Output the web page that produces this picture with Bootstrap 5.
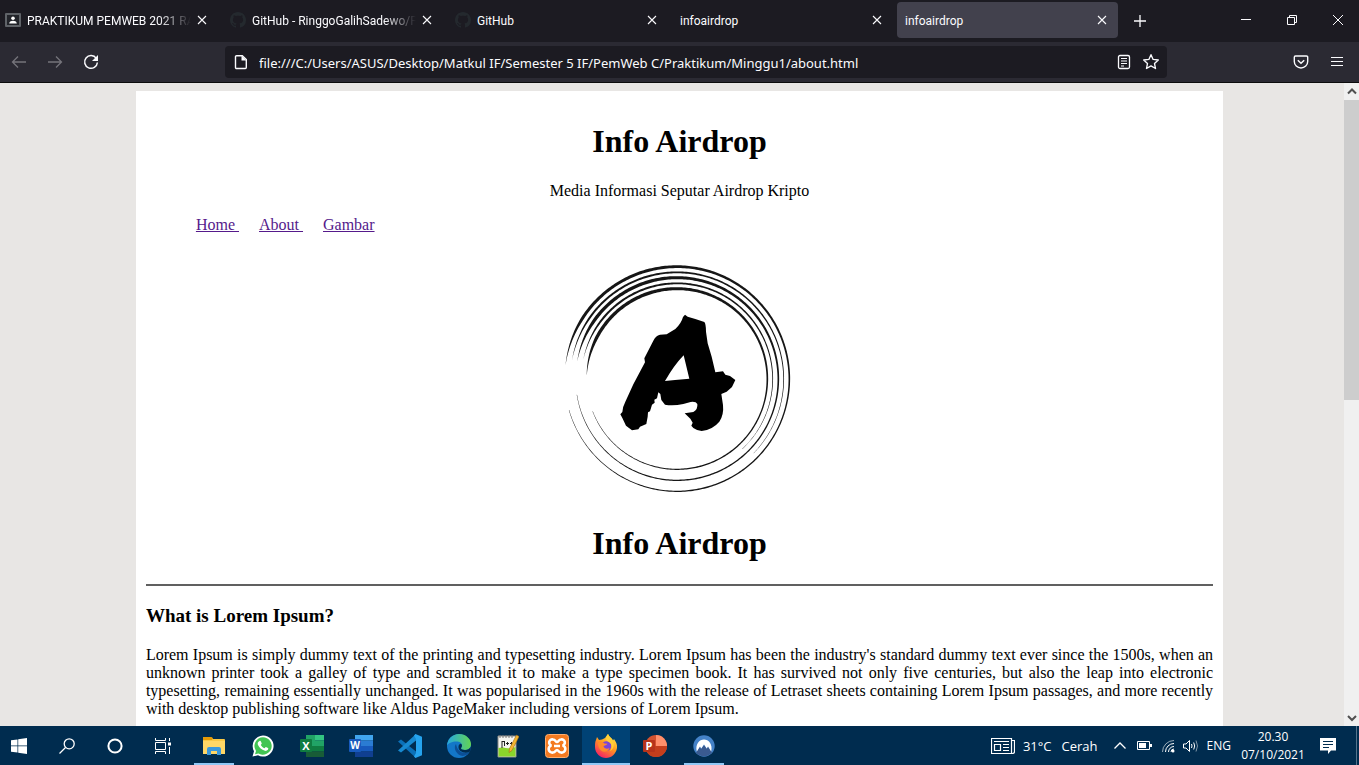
<!DOCTYPE html>
<html lang="id">
<head>
<meta charset="utf-8">
<meta name="viewport" content="width=device-width, initial-scale=1">
<title>infoairdrop</title>
<link href="https://cdn.jsdelivr.net/npm/bootstrap@5.3.0/dist/css/bootstrap.min.css" rel="stylesheet">
<style>
  body { font-family: "Open Sans", "Noto Sans", sans-serif; font-size: 12px; line-height: 18px; }
  svg { display: block; flex: none; }
  button { color: inherit; background: none; border: 0; padding: 0; }

  /* Browser window */
  .tab-strip { background: #1c1b22; color: #fbfbfe; height: 42px; padding: 2px 0; }
  .tab-list { gap: 4px; min-width: 0; }
  .tab-item { flex: 0 1 221px; min-width: 0; height: 36px; padding: 0 11px 0 8px; border-radius: 4px; gap: 6px; }
  .tab-item:first-child { flex-basis: 218px; padding-left: 5px; }
  .tab-item.current { background: #42414d; }
  .tab-title { color: inherit; text-decoration: none; white-space: nowrap; overflow: hidden; font-family: Roboto, "Open Sans", sans-serif; padding-top: 2px; }
  .tab-title.fade-out { -webkit-mask-image: linear-gradient(to left, transparent, #000 32px); mask-image: linear-gradient(to left, transparent, #000 32px); }
  .new-tab { padding: 0 12px; }
  .win-btn { width: 46px; height: 36px; padding-left: 4px; }
  .tool-row { background: #2b2a33; color: #fbfbfe; height: 41px; border-bottom: 1px solid #0c0c0d; }
  .tool-left { width: 225px; gap: 20px; padding-left: 11px; }
  .tool-right { width: 192px; gap: 20px; padding-right: 14px; }
  .url-box { background: #1c1b22; height: 32px; border-radius: 4px; padding: 0 7px 0 8px; gap: 10px; }
  .url-box input { background: none; border: 0; outline: 0; color: inherit; font-family: "Noto Sans", sans-serif; font-size: 13px; padding: 2px 0 0; min-width: 0; }

  /* Web page */
  .viewport { background: #e8e6e4; min-height: 0; }
  .sheet { width: 80%; background: #fff; color: #000; padding: 32px 10px; font-family: "Liberation Serif", serif; font-size: 16px; line-height: 18px; }
  .sheet h1 { font-size: 32px; font-weight: 700; line-height: 36px; margin: 0; }
  .sheet h2 { font-size: 19px; font-weight: 700; line-height: 20px; margin: 0 0 20px; }
  .sheet a { color: #551a8b; white-space: pre; }
  .tagline { margin: 23px 0 0; }
  .site-nav { gap: 20px; padding-left: 50px; margin: 16px 0; }
  .brand-end { padding-top: 20px; }
  .rule { border: 0; opacity: 1; height: 2px; background: #606060; margin: 23px 0 20px; }
  .justified { text-align: justify; }
  .scroll-track { width: 15px; background: #f0f0f0; }
  .scroll-thumb { height: 300px; background: #cdcdcd; }

  /* Desktop taskbar */
  .taskbar { background: #002c4f; color: #fff; height: 39px; }
  .task-btn { width: 48px; height: 39px; display: flex; align-items: center; justify-content: center; border-bottom: 2px solid transparent; padding-top: 2px; }
  .task-btn.start { width: 43px; padding-right: 5px; }
  .task-btn.notices { width: 51px; padding-right: 5px; }
  .task-btn.running { width: 40px; margin: 0 4px; border-color: #90c8f6; }
  .task-btn.focused { border-color: #90c8f6; background: #004275; }
  .apps { gap: 1px; margin-left: 3px; }
  .weather { font-size: 13px; gap: 8px; }
  .weather-text { gap: 10px; }
  .tray { gap: 8px; margin-left: 15px; }
  .clock { width: 64px; margin-left: 10px; }
  .desk-edge { width: 3px; border-left: 1px solid #55748c; }
</style>
</head>
<body class="vh-100 d-flex flex-column overflow-hidden">

<svg width="0" height="0" class="position-absolute" aria-hidden="true">
  <defs>
    <symbol id="i-x" viewBox="0 0 10 10"><path d="M1 1l8 8M9 1l-8 8" stroke="currentColor" stroke-width="1.1" fill="none"/></symbol>
    <symbol id="i-github" viewBox="0 0 16 16"><path fill="#24292e" d="M8 0C3.58 0 0 3.58 0 8c0 3.54 2.29 6.53 5.47 7.59.4.07.55-.17.55-.38 0-.19-.01-.82-.01-1.49-2.01.37-2.53-.49-2.69-.94-.09-.23-.48-.94-.82-1.13-.28-.15-.68-.52-.01-.53.63-.01 1.08.58 1.23.82.72 1.21 1.87.87 2.33.66.07-.52.28-.87.51-1.07-1.78-.2-3.64-.89-3.64-3.95 0-.87.31-1.59.82-2.15-.08-.2-.36-1.02.08-2.12 0 0 .67-.21 2.2.82.64-.18 1.32-.27 2-.27s1.36.09 2 .27c1.53-1.04 2.2-.82 2.2-.82.44 1.1.16 1.92.08 2.12.51.56.82 1.27.82 2.15 0 3.07-1.87 3.75-3.65 3.95.29.25.54.73.54 1.48 0 1.07-.01 1.93-.01 2.2 0 .21.15.46.55.38A8.01 8.01 0 0 0 16 8c0-4.42-3.58-8-8-8z"/></symbol>
  </defs>
</svg>

<header>
  <div class="tab-strip d-flex">
    <nav class="tab-list d-flex flex-grow-1" aria-label="Tabs">
      <div class="tab-item d-flex align-items-center">
        <svg width="16" height="14" viewBox="0 0 16 14"><rect width="16" height="14" rx="1" fill="#5f6368"/><rect x="2" y="2" width="12" height="10" fill="#22242a"/><circle cx="8" cy="5.3" r="1.8" fill="#fff"/><path d="M4.2 10.500C4.200 8.500 6.500 7.800 8 7.800s3.800.7 3.800 2.700z" fill="#fff"/></svg>
        <a href="#" class="tab-title fade-out flex-grow-1">PRAKTIKUM PEMWEB 2021 RA,</a>
        <button aria-label="Close tab"><svg width="10" height="10"><use href="#i-x"/></svg></button>
      </div>
      <div class="tab-item d-flex align-items-center">
        <svg width="16" height="16"><use href="#i-github"/></svg>
        <a href="#" class="tab-title fade-out flex-grow-1">GitHub - RinggoGalihSadewo/P</a>
        <button aria-label="Close tab"><svg width="10" height="10"><use href="#i-x"/></svg></button>
      </div>
      <div class="tab-item d-flex align-items-center">
        <svg width="16" height="16"><use href="#i-github"/></svg>
        <a href="#" class="tab-title flex-grow-1">GitHub</a>
        <button aria-label="Close tab"><svg width="10" height="10"><use href="#i-x"/></svg></button>
      </div>
      <div class="tab-item d-flex align-items-center">
        <a href="#" class="tab-title flex-grow-1">infoairdrop</a>
        <button aria-label="Close tab"><svg width="10" height="10"><use href="#i-x"/></svg></button>
      </div>
      <div class="tab-item current d-flex align-items-center">
        <a href="#" class="tab-title flex-grow-1" aria-current="page">infoairdrop</a>
        <button aria-label="Close tab"><svg width="10" height="10"><use href="#i-x"/></svg></button>
      </div>
      <button class="new-tab" aria-label="New tab"><svg width="12" height="12" viewBox="0 0 12 12"><path d="M6 0v12M0 6h12" stroke="currentColor" stroke-width="1.300"/></svg></button>
    </nav>
    <div class="d-flex">
      <button class="win-btn d-flex align-items-center justify-content-center" aria-label="Minimize"><svg width="10" height="10" viewBox="0 0 10 10"><path d="M0 4.500h10" stroke="currentColor"/></svg></button>
      <button class="win-btn d-flex align-items-center justify-content-center" aria-label="Restore"><svg width="10" height="10" viewBox="0 0 10 10"><path d="M.5 2.500h7v7h-7zM2.500 2.500v-2h7v7h-2" fill="none" stroke="currentColor"/></svg></button>
      <button class="win-btn d-flex align-items-center justify-content-center" aria-label="Close"><svg width="10" height="10" viewBox="0 0 10 10"><path d="M0 0l10 10M10 0L0 10" stroke="currentColor"/></svg></button>
    </div>
  </div>

  <div class="tool-row d-flex align-items-center">
    <div class="tool-left d-flex align-items-center">
      <button aria-label="Back"><svg width="16" height="16" viewBox="0 0 16 16" fill="none" stroke="#75747b" stroke-width="1.300"><path d="M15 8H1.500M7 2.500L1.500 8 7 13.500"/></svg></button>
      <button aria-label="Forward"><svg width="16" height="16" viewBox="0 0 16 16" fill="none" stroke="#75747b" stroke-width="1.300"><path d="M1 8h13.500M9 2.500L14.500 8 9 13.500"/></svg></button>
      <button aria-label="Reload"><svg width="16" height="16" viewBox="0 0 16 16"><path d="M13.300 4.300A6.400 6.400 0 1 0 14.400 8.500" fill="none" stroke="currentColor" stroke-width="1.500"/><path d="M15 1v6H9z" fill="currentColor"/></svg></button>
    </div>
    <form class="url-box d-flex align-items-center flex-grow-1">
      <svg width="16" height="16" viewBox="0 0 16 16"><path d="M3.500 1.700h5.800L13.300 5.500v8a1 1 0 0 1-1 1H3.500a1 1 0 0 1-1-1v-10.800a1 1 0 0 1 1-1z" fill="none" stroke="currentColor" stroke-width="1.400"/><path d="M8.500 1.500v5h5z" fill="currentColor"/></svg>
      <input type="text" class="flex-grow-1" aria-label="Address" value="file:///C:/Users/ASUS/Desktop/Matkul IF/Semester 5 IF/PemWeb C/Praktikum/Minggu1/about.html">
      <button type="button" aria-label="Reader view"><svg width="16" height="16" viewBox="0 0 16 16" fill="none" stroke="currentColor" stroke-width="1.300"><rect x="2.500" y="1.500" width="11" height="13" rx="1.500"/><path d="M5 4.500h6M5 7h6M5 9.500h6M5 12h3" stroke-width="1"/></svg></button>
      <button type="button" aria-label="Bookmark"><svg width="18" height="18" viewBox="0 0 16 16"><path d="M8 1.500l1.900 4.200 4.600.5-3.400 3.100.9 4.500L8 11.500l-4 2.300.9-4.500L1.500 6.200l4.600-.5z" fill="none" stroke="currentColor" stroke-width="1.200" stroke-linejoin="round"/></svg></button>
    </form>
    <div class="tool-right d-flex align-items-center justify-content-end">
      <button aria-label="Pocket"><svg width="16" height="16" viewBox="0 0 16 16" fill="none" stroke="currentColor" stroke-width="1.400"><path d="M2.500 2h11a1.200 1.200 0 0 1 1.200 1.200V7.500a6.700 6.500 0 0 1-13.400 0V3.200A1.200 1.200 0 0 1 2.500 2z"/><path d="M4.800 6.200L8 9.300l3.200-3.100" stroke-width="1.500"/></svg></button>
      <button aria-label="Menu"><svg width="16" height="16" viewBox="0 0 16 16"><path d="M2 3.500h12M2 7.500h12M2 11.500h12" stroke="currentColor" stroke-width="1.200"/></svg></button>
    </div>
  </div>
</header>

<div class="viewport flex-grow-1 overflow-hidden position-relative pt-2">
  <main class="sheet mx-auto">
    <div class="text-center">
      <h1>Info Airdrop</h1>
      <p class="tagline">Media Informasi Seputar Airdrop Kripto</p>
    </div>
    <nav class="site-nav d-flex"><a href="#">Home </a><a href="#">About </a><a href="#">Gambar</a></nav>
    <svg class="mx-auto" width="260" height="255" viewBox="0 0 780 765" role="img" aria-label="Info Airdrop logo">
      <g id="rings" fill="#161616"></g>
      <path fill="#000" fill-rule="evenodd" d="M405 194L413 200L436 207L463 216Q468 222 468 245L473 280L485 320L496 367L519 364L526 374L540 378L556 390L546 411L530 425L514 432L519 465Q522 495 508 515Q488 539 455 543Q440 541 430 534L424 527L428 518L421 506L404 490L430 486Q444 478 442 462Q438 454 422 456L400 462Q370 468 345 464L334 450L331 432L325 427L321 445L313 449L314 458L306 464L300 484L294 487L293 500L289 522L270 530L265 538L246 541L228 527L217 504L211 493L217 486Q218 470 226 455L250 403L285 337L283 325L310 272Q317 257 330 254L350 253L376 237Q394 220 399 201ZM401 316Q372 346 345 393L375 390L418 386Z"/>
    </svg>
    <h1 class="text-center brand-end">Info Airdrop</h1>
    <hr class="rule">
    <h2>What is Lorem Ipsum?</h2>
    <p class="justified">Lorem Ipsum is simply dummy text of the printing and typesetting industry. Lorem Ipsum has been the industry's standard dummy text ever since the 1500s, when an unknown printer took a galley of type and scrambled it to make a type specimen book. It has survived not only five centuries, but also the leap into electronic typesetting, remaining essentially unchanged. It was popularised in the 1960s with the release of Letraset sheets containing Lorem Ipsum passages, and more recently with desktop publishing software like Aldus PageMaker including versions of Lorem Ipsum.</p>
  </main>
  <div class="scroll-track position-absolute top-0 end-0 h-100 d-flex flex-column" aria-hidden="true">
    <svg width="15" height="17" viewBox="0 0 15 17"><path d="M4 10.500l4-4 4 4" fill="none" stroke="#505050" stroke-width="2"/></svg>
    <div class="scroll-thumb"></div>
    <svg class="mt-auto" width="15" height="17" viewBox="0 0 15 17"><path d="M4 7l4 4 4-4" fill="none" stroke="#505050" stroke-width="2"/></svg>
  </div>
</div>

<footer class="taskbar d-flex align-items-center flex-shrink-0">
  <button class="task-btn start" aria-label="Start"><svg width="16" height="16" viewBox="0 0 16 16" fill="#fff"><path d="M0 2.300l6.500-.9v6.200H0zM7.200 1.300L16 0v7.600H7.200zM0 8.300h6.500v6.300L0 13.700zM7.200 8.300H16V16l-8.800-1.300z"/></svg></button>
  <button class="task-btn" aria-label="Search"><svg width="16" height="16" viewBox="0 0 16 16" fill="none" stroke="#fff" stroke-width="1.300"><circle cx="10.200" cy="5.800" r="5"/><path d="M6.500 9.500L.5 15.500"/></svg></button>
  <button class="task-btn" aria-label="Cortana"><svg width="16" height="16" viewBox="0 0 16 16"><circle cx="8" cy="8" r="6.600" fill="none" stroke="#fff" stroke-width="2"/></svg></button>
  <button class="task-btn" aria-label="Task view"><svg width="16" height="16" viewBox="0 0 16 16" fill="none" stroke="#fff"><path d="M.5 0v2.500h10V0M.5 16v-2.500h10V16M.5 4.500h10v7H.5zM14.500 0v3M14.500 9v7"/><path d="M13 4.500h3v3h-3z" fill="#fff" stroke="none"/></svg></button>

  <div class="apps d-flex">
    <button class="task-btn running" aria-label="File Explorer"><svg width="22" height="20" viewBox="0 0 22 20"><path d="M0 2a1 1 0 0 1 1-1h7l2 2h11a1 1 0 0 1 1 1v14H0z" fill="#f9c846"/><path d="M0 2a1 1 0 0 1 1-1h7l2 1-1 2H0z" fill="#e59a06"/><path d="M0 5h22v13H0z" fill="#ffd766"/><path d="M4 19v-6a2 2 0 0 1 2-2h10a2 2 0 0 1 2 2v6h-4v-4H8v4z" fill="#3a98dc"/></svg></button>
    <button class="task-btn" aria-label="WhatsApp"><svg width="22" height="22" viewBox="0 0 22 22"><path d="M11 .5a10.500 10.500 0 1 1-5 19.700L.5 21.500 2 16.200A10.500 10.500 0 0 1 11 .5z" fill="#fff"/><path d="M11 2.300a8.700 8.700 0 1 1-4.600 16.100L3 19.200l1-3.300A8.700 8.700 0 0 1 11 2.300z" fill="#43c553"/><path d="M7.500 6c.6-.3 1.200-.2 1.400.4l.8 1.800c.2.600-.7 1.300-.9 1.700.9 1.600 2.100 2.600 3.700 3.300.5-.3 1-1.300 1.400-1.200l2.100 1c.5.3.2 1.300-.1 1.800-.7.9-2 1.300-3 1-3.400-.9-5.700-3-7-6-.6-1.500.1-3.200 1.600-3.800z" fill="#fff"/></svg></button>
    <button class="task-btn" aria-label="Excel"><svg width="24" height="22" viewBox="0 0 24 22"><path d="M6 0h9v11H6z" fill="#21a366"/><path d="M15 0h9v5.500h-9z" fill="#33c481"/><path d="M15 5.500h9V11h-9z" fill="#21a366"/><path d="M6 11h18v5.500H6z" fill="#107c41"/><path d="M6 16.500h18V22H6z" fill="#185c37"/><rect y="4" width="12" height="13" rx="1" fill="#107c41"/><text x="6" y="14.500" text-anchor="middle" font-size="11" font-weight="700" fill="#fff">X</text></svg></button>
    <button class="task-btn" aria-label="Word"><svg width="24" height="22" viewBox="0 0 24 22"><path d="M6 0h18v5.500H6z" fill="#41a5ee"/><path d="M6 5.500h18V11H6z" fill="#2b7cd3"/><path d="M6 11h18v5.500H6z" fill="#185abd"/><path d="M6 16.500h18V22H6z" fill="#103f91"/><rect y="4" width="12" height="13" rx="1" fill="#185abd"/><text x="6" y="14" text-anchor="middle" font-size="10" font-weight="700" fill="#fff">W</text></svg></button>
    <button class="task-btn" aria-label="Visual Studio Code"><svg width="24" height="24" viewBox="0 0 24 24"><path d="M0 7.500L3 5.500 18 17.500V24z" fill="#0b70b8"/><path d="M0 16.500L3 18.500 18 6.500V0z" fill="#1789d0"/><path d="M17.500 0L24 2.800v18.400L17.500 24 16 22.500 18 19V5l-2-3.500z" fill="#25a3ee"/></svg></button>
    <button class="task-btn" aria-label="Edge"><svg width="24" height="24" viewBox="0 0 24 24"><defs><linearGradient id="eg" x1="0" x2="1"><stop offset="0" stop-color="#27a7e0"/><stop offset="1" stop-color="#62d453"/></linearGradient></defs><circle cx="12" cy="12" r="12" fill="#1377c8"/><path d="M0 11.500C.5 5 5.500 0 12 0c7 0 12 5 12 10 0 4-3 6-6 6-2.500 0-4-.8-4-1.700 0-.7 1-1 1-2.800C15 9 12.500 7.500 9.500 7.500 5 7.500 1 9.500 0 11.500z" fill="url(#eg)"/><path d="M9 10c-2.500 3-1 9 4.500 11.500C17 23 21 20.500 22.500 18c-6 2.500-12 0-13.500-8z" fill="#0c4f96"/><path d="M15 11.500c0 1.800-1 2.100-1 2.800 0 .9 1.500 1.700 4 1.700 2.200 0 5-1 5.800-3.500 0 2.500-.5 4-1.300 5.500-6 2-11.500-1-11-5.500.2-2 1.500-3 2.500-2.800.6.300 1 .9 1 1.800z" fill="#002c4f"/></svg></button>
    <button class="task-btn" aria-label="Notepad++"><svg width="22" height="24" viewBox="0 0 22 24"><path d="M1 2h18v21H1z" fill="#f5f5f0" stroke="#8b8b86"/><path d="M1.500 14C6 12 12 16 18.500 13v9.500h-17z" fill="#8bd52b"/><path d="M3 1v3M6 1v3M9 1v3M12 1v3M15 1v3" stroke="#777"/><path d="M5 7v7M5 7.500h2.500M7.500 7v5M9 9.500h3M13 9.500h3M10.500 8v3M14.500 8v3" stroke="#222" fill="none"/><path d="M19.500 1l2.500 1.500-7 14-3 2 .5-4z" fill="#f2b632" stroke="#a66c16" stroke-width=".6"/></svg></button>
    <button class="task-btn" aria-label="XAMPP"><svg width="24" height="24" viewBox="0 0 24 24"><rect x=".5" y=".5" width="23" height="23" rx="3" fill="#f47a20" stroke="#ffad6d"/><path d="M8 5.500a3 3 0 0 0-1.500 6A3.300 3.300 0 0 0 8 18.500c2.500 0 2.500-2.500 4-2.500s1.500 2.500 4 2.500a3.300 3.300 0 0 0 1.500-7A3 3 0 0 0 16 5.500c-2.500 0-2.500 2.500-4 2.500S10.500 5.500 8 5.500zM9 12h6" fill="none" stroke="#fff" stroke-width="2.600"/></svg></button>
    <button class="task-btn focused" aria-label="Firefox"><svg width="24" height="24" viewBox="0 0 24 24"><defs><linearGradient id="ff" x1=".8" y1="0" x2=".2" y2="1"><stop offset="0" stop-color="#fff14f"/><stop offset=".45" stop-color="#ff9a1f"/><stop offset="1" stop-color="#f5156c"/></linearGradient></defs><path d="M2 6l1-3 2 3 3-.5L11 4l3-4c1 3 4 4 5 6.500L20 5c2 3 3.500 5.500 3 9-1 6-5.500 10-11 10S1 19.500 1 13c0-3 0-5 1-7z" fill="url(#ff)"/><circle cx="12.500" cy="12" r="4.800" fill="#7a45d8"/><path d="M4 9c3-2 5-1 6.500.5l3 .3c-1 1.700-3 1.700-4 2.200.5 2.500 3.500 3.500 6 2-1 3.500-5.500 5-8.500 2.500C5 14.500 4 12 4 9z" fill="#ff8a2a"/><path d="M14 0c1 3 4 4 5 7 2 4 0 9-3 10 3-4 1.500-8-2-9.500-3-2-2-5 0-7.500z" fill="#ffcf38"/></svg></button>
    <button class="task-btn" aria-label="PowerPoint"><svg width="24" height="22" viewBox="0 0 24 22"><circle cx="13" cy="11" r="11" fill="#d35230"/><path d="M13 0a11 11 0 0 1 11 11H13z" fill="#ff8f6b"/><path d="M2 11h22a11 11 0 0 1-22 0z" fill="#c43e1c"/><rect y="5" width="12" height="12" rx="1" fill="#b7331a"/><text x="6" y="15" text-anchor="middle" font-size="11" font-weight="700" fill="#fff">P</text></svg></button>
    <button class="task-btn running" aria-label="NordVPN"><svg width="22" height="22" viewBox="0 0 22 22"><circle cx="11" cy="11" r="10.700" fill="#4482c8"/><path d="M3 17.800l3.500-6L8 14l3-4 2.700 3.800 1.500-2.200 3.800 6A10.700 10.700 0 0 1 3 17.800z" fill="#3a5a90"/><path d="M3.800 16.500C2 9 6.500 4.500 11 4.500s9 4.500 7.200 12l-3.200-5-1.300 2L11 9.500l-2.700 4-1.300-2z" fill="#fff"/></svg></button>
  </div>

  <div class="weather d-flex align-items-center ms-auto">
    <svg width="24" height="18" viewBox="0 0 24 18" fill="none" stroke="#fff"><path d="M.5 1.500h20v15h-20zM20.500 3.500h3v11q0 2-2 2h-1M3 4.500h15M12 7.500h6M12 10.500h6M12 13.500h6M3.500 7.500h6v6h-6z" stroke-width="1.200"/></svg>
    <div class="weather-text d-flex"><span>31°C</span><span>Cerah</span></div>
  </div>
  <div class="tray d-flex align-items-center">
    <button aria-label="Show hidden icons"><svg width="14" height="14" viewBox="0 0 14 14"><path d="M1.500 9.500L7 4l5.500 5.500" fill="none" stroke="#fff" stroke-width="1.300"/></svg></button>
    <svg width="18" height="14" viewBox="0 0 18 14"><path d="M2.500 2.500h12v8h-12z" fill="none" stroke="#fff"/><path d="M4 4h7v5H4z" fill="#fff"/><path d="M15 5h2v3h-2z" fill="#fff"/></svg>
    <svg width="14" height="14" viewBox="0 0 14 14" fill="none" stroke="#fff"><path d="M1.500 13A11.500 11.500 0 0 1 13 1.500" opacity=".6"/><path d="M4.500 13A8.500 8.500 0 0 1 13 4.500M7.500 13A5.500 5.500 0 0 1 13 7.500" /><circle cx="12" cy="12" r="1.500" fill="#fff" stroke="none"/><path d="M10 13a3 3 0 0 1 3-3"/></svg>
    <svg width="16" height="14" viewBox="0 0 16 14" fill="none" stroke="#fff"><path d="M.5 5h2.500l3.500-3.500v11L3 9H.5z"/><path d="M8.500 5q1 2 0 4M10.700 3.500q2 3.500 0 7"/><path d="M13 1.500q3 5.500 0 11" opacity=".5"/></svg>
    <span>ENG</span>
  </div>
  <div class="clock text-center"><div>20.30</div><div>07/10/2021</div></div>
  <button class="task-btn notices" aria-label="Notifications"><svg width="16" height="16" viewBox="0 0 16 16"><path d="M0 0h16v12.500H11L8 16v-3.500H0z" fill="#fff"/><path d="M3 3.500h10M3 6.500h10M3 9.500h6" stroke="#002c4f"/></svg></button>
  <div class="desk-edge h-100"></div>
</footer>

<script>
  // Brush rings: [radius, start angle, end angle, widest, thinnest]; degrees run clockwise from the left.
  const rings = [
    [337, 7, 344, 9, 4],
    [320, 10, 224, 6, 3],
    [304, 10, 351, 10, 4],
    [287, 12, 227, 6, 3],
    [271, 2, 339, 10, 4]
  ];
  const cx = 381, cy = 387;
  document.getElementById('rings').innerHTML = rings.map(([r, from, to, wide, thin]) => {
    const outer = [], inner = [];
    for (let a = from; a <= to; a++) {
      const rise = Math.min(1, (a - from) / 25);
      const fall = Math.max(0, 1 - Math.max(0, a - 70) / 130);
      const end = Math.min(1, (to - a) / 110 + 0.25);
      const w = (thin + (wide - thin) * fall) * rise * end / 2;
      const t = (180 + a) * Math.PI / 180;
      const at = d => (cx + (r + d) * Math.cos(t)).toFixed(1) + ' ' + (cy + (r + d) * Math.sin(t)).toFixed(1);
      outer.push(at(w));
      inner.unshift(at(-w));
    }
    return `<path d="M${outer.concat(inner).join('L')}Z"/>`;
  }).join('');
</script>
<script src="https://cdn.jsdelivr.net/npm/bootstrap@5.3.0/dist/js/bootstrap.bundle.min.js"></script>
</body>
</html>
